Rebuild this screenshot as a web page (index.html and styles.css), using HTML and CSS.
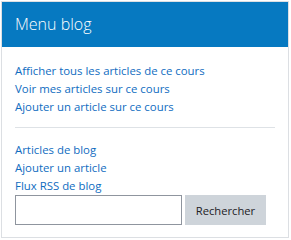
FILE: index.html
```html
<!DOCTYPE html>
<html lang="fr">
<head>
<meta charset="utf-8">
<link rel="stylesheet" href="styles.css">
</head>
<body>
<div class="card">
  <div class="card-header">Menu blog</div>
  <div class="card-body">
    <ul class="links">
      <li><a href="#">Afficher tous les articles de ce cours</a></li>
      <li><a href="#">Voir mes articles sur ce cours</a></li>
      <li><a href="#">Ajouter un article sur ce cours</a></li>
    </ul>
    <hr class="sep">
    <ul class="links">
      <li><a href="#">Articles de blog</a></li>
      <li><a href="#">Ajouter un article</a></li>
      <li><a href="#">Flux RSS de blog</a></li>
    </ul>
    <form class="search">
      <input class="search-input" type="text">
      <button class="search-btn" type="button">Rechercher</button>
    </form>
  </div>
</div>
</body>
</html>
```
FILE: styles.css
```css
html, body { margin: 0; padding: 0; background: #fff; }
body { padding: 1px 0 0 1px; font-family: "Open Sans", "Noto Sans", sans-serif; }
.card {
  width: 286px;
  height: 235px;
  border: 1px solid #dcdfe3;
  display: flex;
  flex-direction: column;
}
.card-header {
  background: #0679c1;
  color: #fff;
  height: 45px;
  box-sizing: border-box;
  padding: 12px 0 0 13px;
  font-size: 16px;
  font-weight: 300;
  line-height: 20px;
}
.card-body {
  padding: 15px 13px 0 13px;
}
.links {
  list-style: none;
  margin: 0;
  padding: 0;
}
.links li {
  font-size: 11.4px;
  line-height: 18px;
  height: 18px;
}
.links a {
  color: #0f6cbf;
  text-decoration: none;
}
.sep {
  margin: 11px 0 13px 0;
  border: 0;
  border-top: 1px solid #dee2e6;
  height: 0;
}
.search {
  display: flex;
  gap: 3px;
  margin: 0;
}
.search-input {
  width: 167px;
  height: 30px;
  box-sizing: border-box;
  border: 1px solid #8f959e;
  margin: 0;
  padding: 0 8px;
}
.search-btn {
  width: 81px;
  height: 30px;
  box-sizing: border-box;
  border: 0;
  background: #ced4da;
  color: #1d2125;
  font-family: "Open Sans", "Noto Sans", sans-serif;
  font-size: 11.2px;
  margin: 0;
  padding: 0;
}
```
